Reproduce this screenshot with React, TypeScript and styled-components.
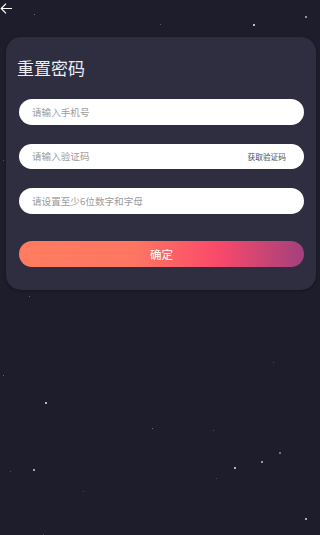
import React from "react";
import styled, { createGlobalStyle } from "styled-components";

const Global = createGlobalStyle`
  html, body { margin: 0; padding: 0; background: #1e1d2b; }
  body { font-family: "Noto Sans CJK SC", "Noto Sans", sans-serif; }
  * { box-sizing: border-box; }
`;

const Page = styled.div`
  position: relative;
  width: 320px;
  height: 535px;
  overflow: hidden;
  background: #1e1d2b;
`;

const Star = styled.span<{ $s: number; $o: number }>`
  position: absolute;
  width: ${(p) => p.$s}px;
  height: ${(p) => p.$s}px;
  background: #ffffff;
  opacity: ${(p) => p.$o};
  border-radius: 1px;
`;

const TopBar = styled.div`
  height: 37px;
  display: flex;
  align-items: flex-start;
  padding-top: 2px;
`;

const BackButton = styled.button`
  border: 0;
  background: none;
  padding: 0;
  width: 14px;
  height: 14px;
  display: flex;
  cursor: pointer;
`;

const Card = styled.div`
  position: relative;
  margin-left: 6px;
  width: 310px;
  background: #2e2e40;
  border-radius: 15px;
  padding: 19px 11px 23px;
  box-shadow: 0 1px 3px rgba(0, 0, 0, 0.35);
`;

const Title = styled.h1`
  margin: 0;
  font-size: 17px;
  line-height: 24px;
  font-weight: 400;
  color: #ececf2;
`;

const Form = styled.div`
  display: flex;
  flex-direction: column;
  gap: 19px;
  margin: 19px 1px 0 2px;
`;

const Field = styled.div`
  height: 25.5px;
  border-radius: 13px;
  background: #ffffff;
  display: flex;
  align-items: center;
  padding: 0 18px 0 13px;
`;

const Input = styled.input`
  flex: 1;
  min-width: 0;
  border: 0;
  outline: none;
  background: transparent;
  padding: 0;
  font-family: "Noto Sans CJK SC", sans-serif;
  font-size: 9.6px;
  color: #333;
  &::placeholder { color: #9c9c9c; }
`;

const CodeLink = styled.span`
  font-size: 7.7px;
  color: #4f4f4f;
  white-space: nowrap;
`;

const Submit = styled.button`
  margin-top: 8.5px;
  height: 25.5px;
  border: 0;
  border-radius: 13px;
  background: linear-gradient(90deg, #ff7c5f 0%, #fe7662 40%, #f9496a 70%, #a3407d 100%);
  color: #ffffff;
  font-family: "Noto Sans CJK SC", sans-serif;
  font-size: 11.5px;
  padding: 0;
`;

const stars: [number, number, number, number][] = [
  [34, 14, 1, 0.5], [253, 24, 1.5, 0.95], [305, 16, 1.5, 0.7], [160, 24, 1, 0.35],
  [288, 40, 1, 0.35], [308, 60, 1, 0.4], [217, 139, 1, 0.3], [263, 141, 1, 0.25],
  [3, 160, 1, 0.3], [10, 198, 1, 0.3], [124, 185, 1, 0.25], [17, 235, 1, 0.35],
  [110, 234, 1, 0.25], [207, 234, 1, 0.25], [306, 270, 1.5, 0.45], [70, 282, 1, 0.3],
  [100, 278, 1, 0.3], [253, 282, 1, 0.3], [280, 282, 1, 0.25], [29, 296, 1, 0.4],
  [3, 375, 1, 0.4], [45, 402, 1.5, 0.9], [152, 428, 1, 0.5], [213, 430, 1, 0.3],
  [273, 362, 1, 0.3], [279, 452, 1.5, 0.5], [261, 461, 1.5, 0.75], [234, 467, 1.5, 0.9],
  [33, 469, 1.5, 0.8], [10, 471, 1, 0.3], [216, 478, 1, 0.25], [83, 491, 1, 0.25],
  [305, 518, 1.5, 0.85], [43, 534, 1, 0.3],
];

export default function App() {
  return (
    <Page>
      <Global />
      {stars.map(([x, y, s, o], i) => (
        <Star key={i} $s={s} $o={o} style={{ left: x, top: y }} />
      ))}
      <TopBar>
        <BackButton aria-label="返回">
          <svg width="13" height="13" viewBox="0 0 13 13" fill="none">
            <path d="M12 6.5H1.2M6 1.6L1.2 6.5 6 11.4" stroke="#ffffff" strokeWidth="1.2" />
          </svg>
        </BackButton>
      </TopBar>
      <Card>
        <Title>重置密码</Title>
        <Form>
          <Field>
            <Input placeholder="请输入手机号" />
          </Field>
          <Field>
            <Input placeholder="请输入验证码" />
            <CodeLink>获取验证码</CodeLink>
          </Field>
          <Field>
            <Input placeholder="请设置至少6位数字和字母" />
          </Field>
          <Submit>确定</Submit>
        </Form>
      </Card>
    </Page>
  );
}
